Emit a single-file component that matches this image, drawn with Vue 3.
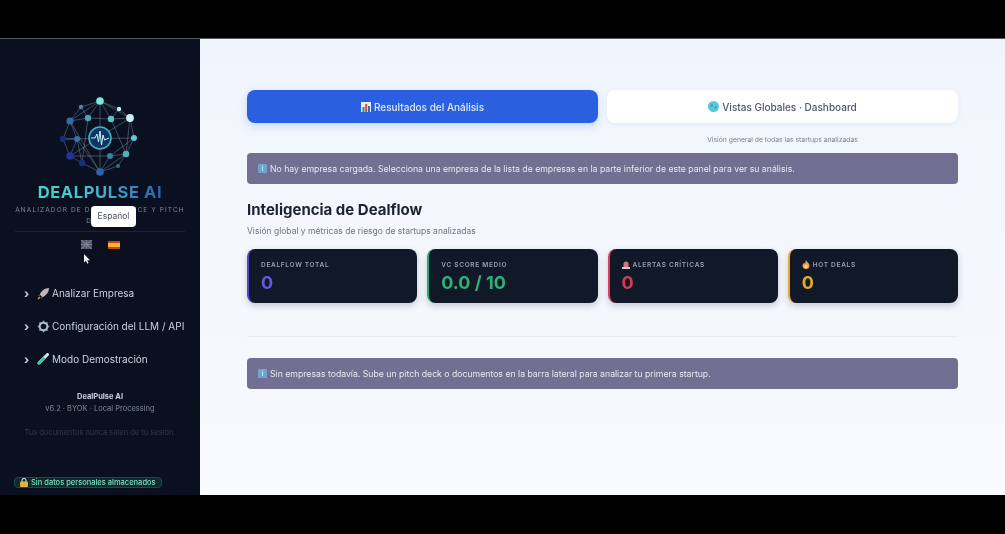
<script setup>
const nodes = [
  { x: 50, y: 11, r: 3.8, c: '#7ee8e0' },
  { x: 31, y: 17, r: 2.2, c: '#5b7f9c' },
  { x: 69, y: 19, r: 2.2, c: '#cdeef2' },
  { x: 80, y: 28, r: 3.9, c: '#c5f3f3' },
  { x: 84, y: 48, r: 3, c: '#62c9cf' },
  { x: 76, y: 64, r: 3.3, c: '#4fb3bd' },
  { x: 68, y: 76, r: 2, c: '#3f6a8c' },
  { x: 50, y: 82, r: 3.8, c: '#2f62ac' },
  { x: 32, y: 73, r: 3.2, c: '#1d2f7c' },
  { x: 20, y: 66, r: 3.8, c: '#22339a' },
  { x: 13, y: 49, r: 3.2, c: '#1c2a72' },
  { x: 20, y: 31, r: 3.6, c: '#356ba8' },
  { x: 38, y: 28, r: 3.2, c: '#4ba6b2' },
  { x: 61, y: 29, r: 3.2, c: '#57c6c4' },
  { x: 27, y: 49, r: 3, c: '#3d6fae' },
  { x: 60, y: 66, r: 3, c: '#3b7fa8' }
]
const edges = [
  [0, 1], [0, 2], [0, 3], [0, 11], [0, 12], [0, 13], [1, 11], [1, 12], [2, 3], [2, 13], [3, 4], [3, 13], [3, 5],
  [4, 5], [5, 6], [5, 7], [6, 7], [7, 8], [7, 15], [8, 9], [9, 10], [10, 11], [9, 14], [10, 14], [11, 12], [11, 14],
  [12, 13], [14, 8], [15, 5], [4, 15], [0, 7], [10, 4], [11, 7], [3, 9], [13, 5], [12, 8], [15, 9], [14, 7]
]
const cards = [
  { label: 'DEALFLOW TOTAL', value: '0', tone: 'indigo' },
  { label: 'VC SCORE MEDIO', value: '0.0 / 10', tone: 'green' },
  { label: 'ALERTAS CRÍTICAS', value: '0', tone: 'red', icon: 'siren' },
  { label: 'HOT DEALS', value: '0', tone: 'amber', icon: 'fire' }
]
</script>

<template>
  <div class="frame">
    <div class="band-top"></div>
    <div class="shell">
      <aside class="sidebar">
        <svg class="logo" viewBox="0 0 100 90" width="100" height="90">
          <line v-for="(e, i) in edges" :key="i" :x1="nodes[e[0]].x" :y1="nodes[e[0]].y" :x2="nodes[e[1]].x" :y2="nodes[e[1]].y" stroke="#8fa9bf" stroke-opacity=".55" stroke-width=".7" />
          <circle v-for="(n, i) in nodes" :key="'n' + i" :cx="n.x" :cy="n.y" :r="n.r" :fill="n.c" />
          <circle cx="50" cy="48" r="11" fill="#0d3763" stroke="#4fa9c4" stroke-width="1.6" />
          <polyline points="41,48 45,48 47,44 48.5,52 50,41 51.5,55 53,45 54.5,50 59,48" fill="none" stroke="#c9f2f5" stroke-width="1" />
        </svg>
        <div class="brand">DEALPULSE AI</div>
        <div class="tagline">ANALIZADOR DE DUE DILIGENCE Y PITCH DECKS</div>
        <hr class="side-rule" />
        <div class="flags">
          <svg width="11" height="9" viewBox="0 0 11 9"><rect width="11" height="9" fill="#59606e" /><path d="M0 0l11 9M11 0L0 9M5.5 0v9M0 4.5h11" stroke="#8a909c" stroke-width="1.2" /></svg>
          <svg width="12" height="8" viewBox="0 0 12 8"><rect width="12" height="8" fill="#c9411c" /><rect y="2" width="12" height="4" fill="#f3b62c" /></svg>
        </div>
        <nav class="menu">
          <div class="menu-row">
            <span class="chev">›</span>
            <svg width="13" height="13" viewBox="0 0 13 13"><path d="M12 1C8 1.2 4.5 3.5 2.800 7.5l2.700 2.700C9.500 8.500 11.800 5 12 1z" fill="#c9b5b8" /><path d="M2.800 7.500L1 8.500l1.500.6zM5.500 10.200l-1 1.800-.6-1.500z" fill="#c7453f" /><path d="M3 10l-2 2" stroke="#e78b4a" stroke-width="1.4" /></svg>
            <span>Analizar Empresa</span>
          </div>
          <div class="menu-row">
            <span class="chev">›</span>
            <svg width="13" height="13" viewBox="0 0 13 13"><circle cx="6.5" cy="6.5" r="3.8" fill="none" stroke="#a9bcc4" stroke-width="2" /><path d="M6.5 .8v2M6.5 10.200v2M.8 6.500h2M10.200 6.500h2M2.500 2.500l1.400 1.400M9.100 9.100l1.400 1.400M10.500 2.500L9.100 3.900M3.900 9.100l-1.400 1.400" stroke="#a9bcc4" stroke-width="1.5" /></svg>
            <span>Configuración del LLM / API</span>
          </div>
          <div class="menu-row">
            <span class="chev">›</span>
            <svg width="13" height="13" viewBox="0 0 13 13"><path d="M10.500 1.500L2 10" stroke="#d6efe8" stroke-width="3" stroke-linecap="round" /><path d="M6.500 5.500L2 10" stroke="#38c7a8" stroke-width="3" stroke-linecap="round" /></svg>
            <span>Modo Demostración</span>
          </div>
        </nav>
        <div class="foot-name">DealPulse AI</div>
        <div class="foot-version">v6.2 · BYOK · Local Processing</div>
        <div class="foot-note">Tus documentos nunca salen de tu sesión.</div>
        <div class="privacy">
          <svg width="8" height="9" viewBox="0 0 8 9"><rect y="3.5" width="8" height="5.5" rx="1" fill="#e2b33c" /><path d="M2 4V2.500a2 2 0 0 1 4 0V4" fill="none" stroke="#c9cdd2" stroke-width="1.1" /></svg>
          <span>Sin datos personales almacenados</span>
        </div>
        <div class="clip-note">Los datos se procesan localmente y nunca se almacenan en ningún servidor</div>
        <div class="tip">Español</div>
        <svg class="cursor" width="8" height="12" viewBox="0 0 8 12"><path d="M1 1v8.500l2-1.800 1.300 3 1.300-.6-1.300-2.900h2.700z" fill="#f2f4f8" /></svg>
      </aside>

      <main class="content">
        <div class="tabs">
          <button class="tab active">
            <svg width="10" height="10" viewBox="0 0 10 10"><rect width="10" height="10" fill="#e8edf5" /><rect x="1.5" y="5" width="2" height="5" fill="#3f8d68" /><rect x="4.2" y="2" width="2" height="8" fill="#c8503f" /><rect x="7" y="4" width="2" height="6" fill="#3767bd" /></svg>
            Resultados del Análisis
          </button>
          <button class="tab">
            <svg width="11" height="11" viewBox="0 0 11 11"><circle cx="5.5" cy="5.5" r="5.5" fill="#58c6dc" /><path d="M3 2.500l2 1-.5 2-2 0zM7 5l2 .5-1.500 3-1-1z" fill="#4b9ac8" /></svg>
            Vistas Globales · Dashboard
          </button>
        </div>
        <div class="tab-note-row">
          <span></span>
          <p class="tab-note">Visión general de todas las startups analizadas</p>
        </div>

        <div class="alert">
          <span class="info">i</span>
          No hay empresa cargada. Selecciona una empresa de la lista de empresas en la parte inferior de este panel para ver su análisis.
        </div>

        <h2>Inteligencia de Dealflow</h2>
        <p class="sub">Visión global y métricas de riesgo de startups analizadas</p>

        <div class="cards">
          <div v-for="c in cards" :key="c.label" class="card" :class="c.tone">
            <div class="card-label">
              <svg v-if="c.icon === 'siren'" width="8" height="9" viewBox="0 0 8 9"><path d="M1.500 7V4a2.500 2.500 0 0 1 5 0v3z" fill="#e0707a" /><rect y="7" width="8" height="2" fill="#c9ccd4" /></svg>
              <svg v-if="c.icon === 'fire'" width="8" height="9" viewBox="0 0 8 9"><path d="M4 0c.5 2 3.500 3 3.500 5.500a3.500 3.500 0 0 1-7 0C.5 4.200 1.500 3.500 2 2.500c.3.600.6 1 1 1.200C3.300 2.500 3.600 1.200 4 0z" fill="#ec9a3a" /><ellipse cx="4" cy="6.5" rx="1.6" ry="2" fill="#f8d990" /></svg>
              {{ c.label }}
            </div>
            <div class="card-value">{{ c.value }}</div>
          </div>
        </div>

        <hr class="rule" />

        <div class="alert">
          <span class="info">i</span>
          Sin empresas todavía. Sube un pitch deck o documentos en la barra lateral para analizar tu primera startup.
        </div>
      </main>
    </div>
    <div class="band-bottom"></div>
  </div>
</template>

<style>
html, body { background: #000; overflow: hidden; }
</style>

<style scoped>
.frame {
  display: flex;
  flex-direction: column;
  width: 1005px;
  height: 534px;
  overflow: hidden;
  background: #000;
  font-family: Inter, "Liberation Sans", sans-serif;
  filter: blur(.45px);
}
.band-top { height: 39px; flex: none; border-bottom: 1px solid #55585c; box-sizing: border-box; }
.band-bottom { height: 39px; flex: none; }
.shell { flex: 1; display: flex; min-height: 0; }

.sidebar {
  position: relative;
  width: 200px;
  flex: none;
  overflow: hidden;
  background: #0a1020;
  display: flex;
  flex-direction: column;
  align-items: center;
  box-sizing: border-box;
  padding-top: 51px;
}
.logo { display: block; flex: none; }
.brand {
  margin-top: 2px;
  font-size: 16.5px;
  line-height: 20px;
  font-weight: 700;
  letter-spacing: .6px;
  background: linear-gradient(90deg, #3fdcc6 0%, #49b5cf 50%, #2b5fb0 100%);
  -webkit-background-clip: text;
  background-clip: text;
  color: transparent;
}
.tagline {
  width: 170px;
  margin-top: 3px;
  font-size: 6.5px;
  line-height: 11px;
  letter-spacing: 1.1px;
  text-align: center;
  color: #7f8899;
}
.side-rule {
  width: 170px;
  margin: 4px 0 0;
  border: 0;
  border-top: 1px solid #1b2333;
}
.flags { display: flex; align-items: center; gap: 16px; margin-top: 8px; height: 9px; }
.flags svg:first-child { opacity: .85; }
.menu { align-self: stretch; display: flex; flex-direction: column; gap: 19px; margin-top: 37px; padding-left: 24px; }
.menu-row {
  display: flex;
  align-items: center;
  height: 14px;
  font-size: 10px;
  color: #c9d2df;
  white-space: nowrap;
}
.chev { width: 13px; font-size: 12px; font-weight: 700; color: #c9d2df; }
.menu-row svg { margin-right: 2px; flex: none; width: 13px; }
.foot-name { margin-top: 25px; font-size: 7.5px; line-height: 11px; font-weight: 700; color: #c7ceda; }
.foot-version { font-size: 7.5px; line-height: 11px; margin-top: 1px; color: #7f8898; }
.foot-note { margin-top: 13px; font-size: 7.5px; line-height: 11px; color: #2f3849; }
.privacy {
  align-self: flex-start;
  margin: 39px 0 0 14px;
  display: flex;
  align-items: center;
  gap: 3px;
  height: 18px;
  padding: 0 5px;
  box-sizing: border-box;
  border: 1px solid #1a4a46;
  border-radius: 4px;
  background: #0e2a2c;
  font-size: 7.5px;
  font-weight: 500;
  color: #7fe0bd;
  white-space: nowrap;
}
.clip-note { margin-top: 6px; font-size: 7.5px; line-height: 11px; width: 170px; text-align: center; white-space: nowrap; overflow: hidden; color: #3c4557; }
.tip {
  position: absolute;
  left: 91px;
  top: 167px;
  width: 45px;
  height: 21px;
  border-radius: 4px;
  background: #fff;
  color: #4a4f5a;
  font-size: 8.5px;
  line-height: 21px;
  text-align: center;
}
.cursor { position: absolute; left: 83px; top: 214px; }

.content {
  flex: 1;
  min-width: 0;
  box-sizing: border-box;
  padding: 51px 47px 0;
  background: linear-gradient(180deg, #f0f5fd 0%, #f6f8fd 70%, #f9fafe 100%);
}
.tabs { display: grid; grid-template-columns: 351px 351px; gap: 9px; }
.tab {
  display: flex;
  align-items: center;
  justify-content: center;
  gap: 3px;
  height: 33px;
  border: 0;
  border-radius: 8px;
  background: #fff;
  box-shadow: 0 1px 4px rgba(90, 110, 150, .1);
  font-family: inherit;
  font-size: 10px;
  font-weight: 500;
  color: #4f5663;
}
.tab.active { background: #2a60e0; color: #dfe8fb; box-shadow: 0 3px 8px rgba(37, 99, 235, .22); }
.tab-note-row { display: grid; grid-template-columns: 351px 351px; gap: 9px; }
.tab-note { margin: 13px 0 0; height: 8px; font-size: 6.8px; line-height: 8px; text-align: center; color: #7a8291; }
.alert {
  display: flex;
  align-items: center;
  gap: 3px;
  height: 31px;
  padding-left: 11px;
  border-radius: 4px;
  background: #736f92;
  font-size: 8.7px;
  color: #e9e9f2;
  white-space: nowrap;
}
.tab-note-row + .alert { margin-top: 9px; }
.info {
  width: 9px;
  height: 9px;
  background: #6aa6d2;
  color: #fff;
  font-size: 7px;
  line-height: 9px;
  text-align: center;
  border-radius: 1px;
  flex: none;
}
h2 { margin: 16px 0 0; font-size: 15px; line-height: 20px; font-weight: 700; color: #1c2433; }
.sub { margin: 6px 0 0; font-size: 8.5px; line-height: 11px; color: #6c7482; }
.cards { display: grid; grid-template-columns: repeat(4, 1fr); gap: 10px; margin-top: 12px; }
.card {
  height: 54px;
  box-sizing: border-box;
  padding: 11px 11px 0 12px;
  border-radius: 8px;
  border-left: 2px solid;
  background: #111827;
  box-shadow: 0 3px 7px rgba(30, 40, 70, .22);
}
.indigo { border-color: #5046c8; }
.green { border-color: #2ba873; }
.red { border-color: #d8405c; }
.amber { border-color: #eca92c; }
.card-label {
  display: flex;
  align-items: center;
  gap: 3px;
  height: 9px;
  font-size: 6.5px;
  font-weight: 600;
  letter-spacing: .7px;
  color: #98a1b1;
}
.card-value { margin-top: 3px; font-size: 18px; line-height: 21px; font-weight: 700; }
.indigo .card-value { color: #6457d8; }
.green .card-value { color: #2fae77; }
.red .card-value { color: #d13b55; }
.amber .card-value { color: #e3a62e; }
.rule { margin: 33px 0 21px; border: 0; border-top: 1px solid #e9edf4; }
</style>
